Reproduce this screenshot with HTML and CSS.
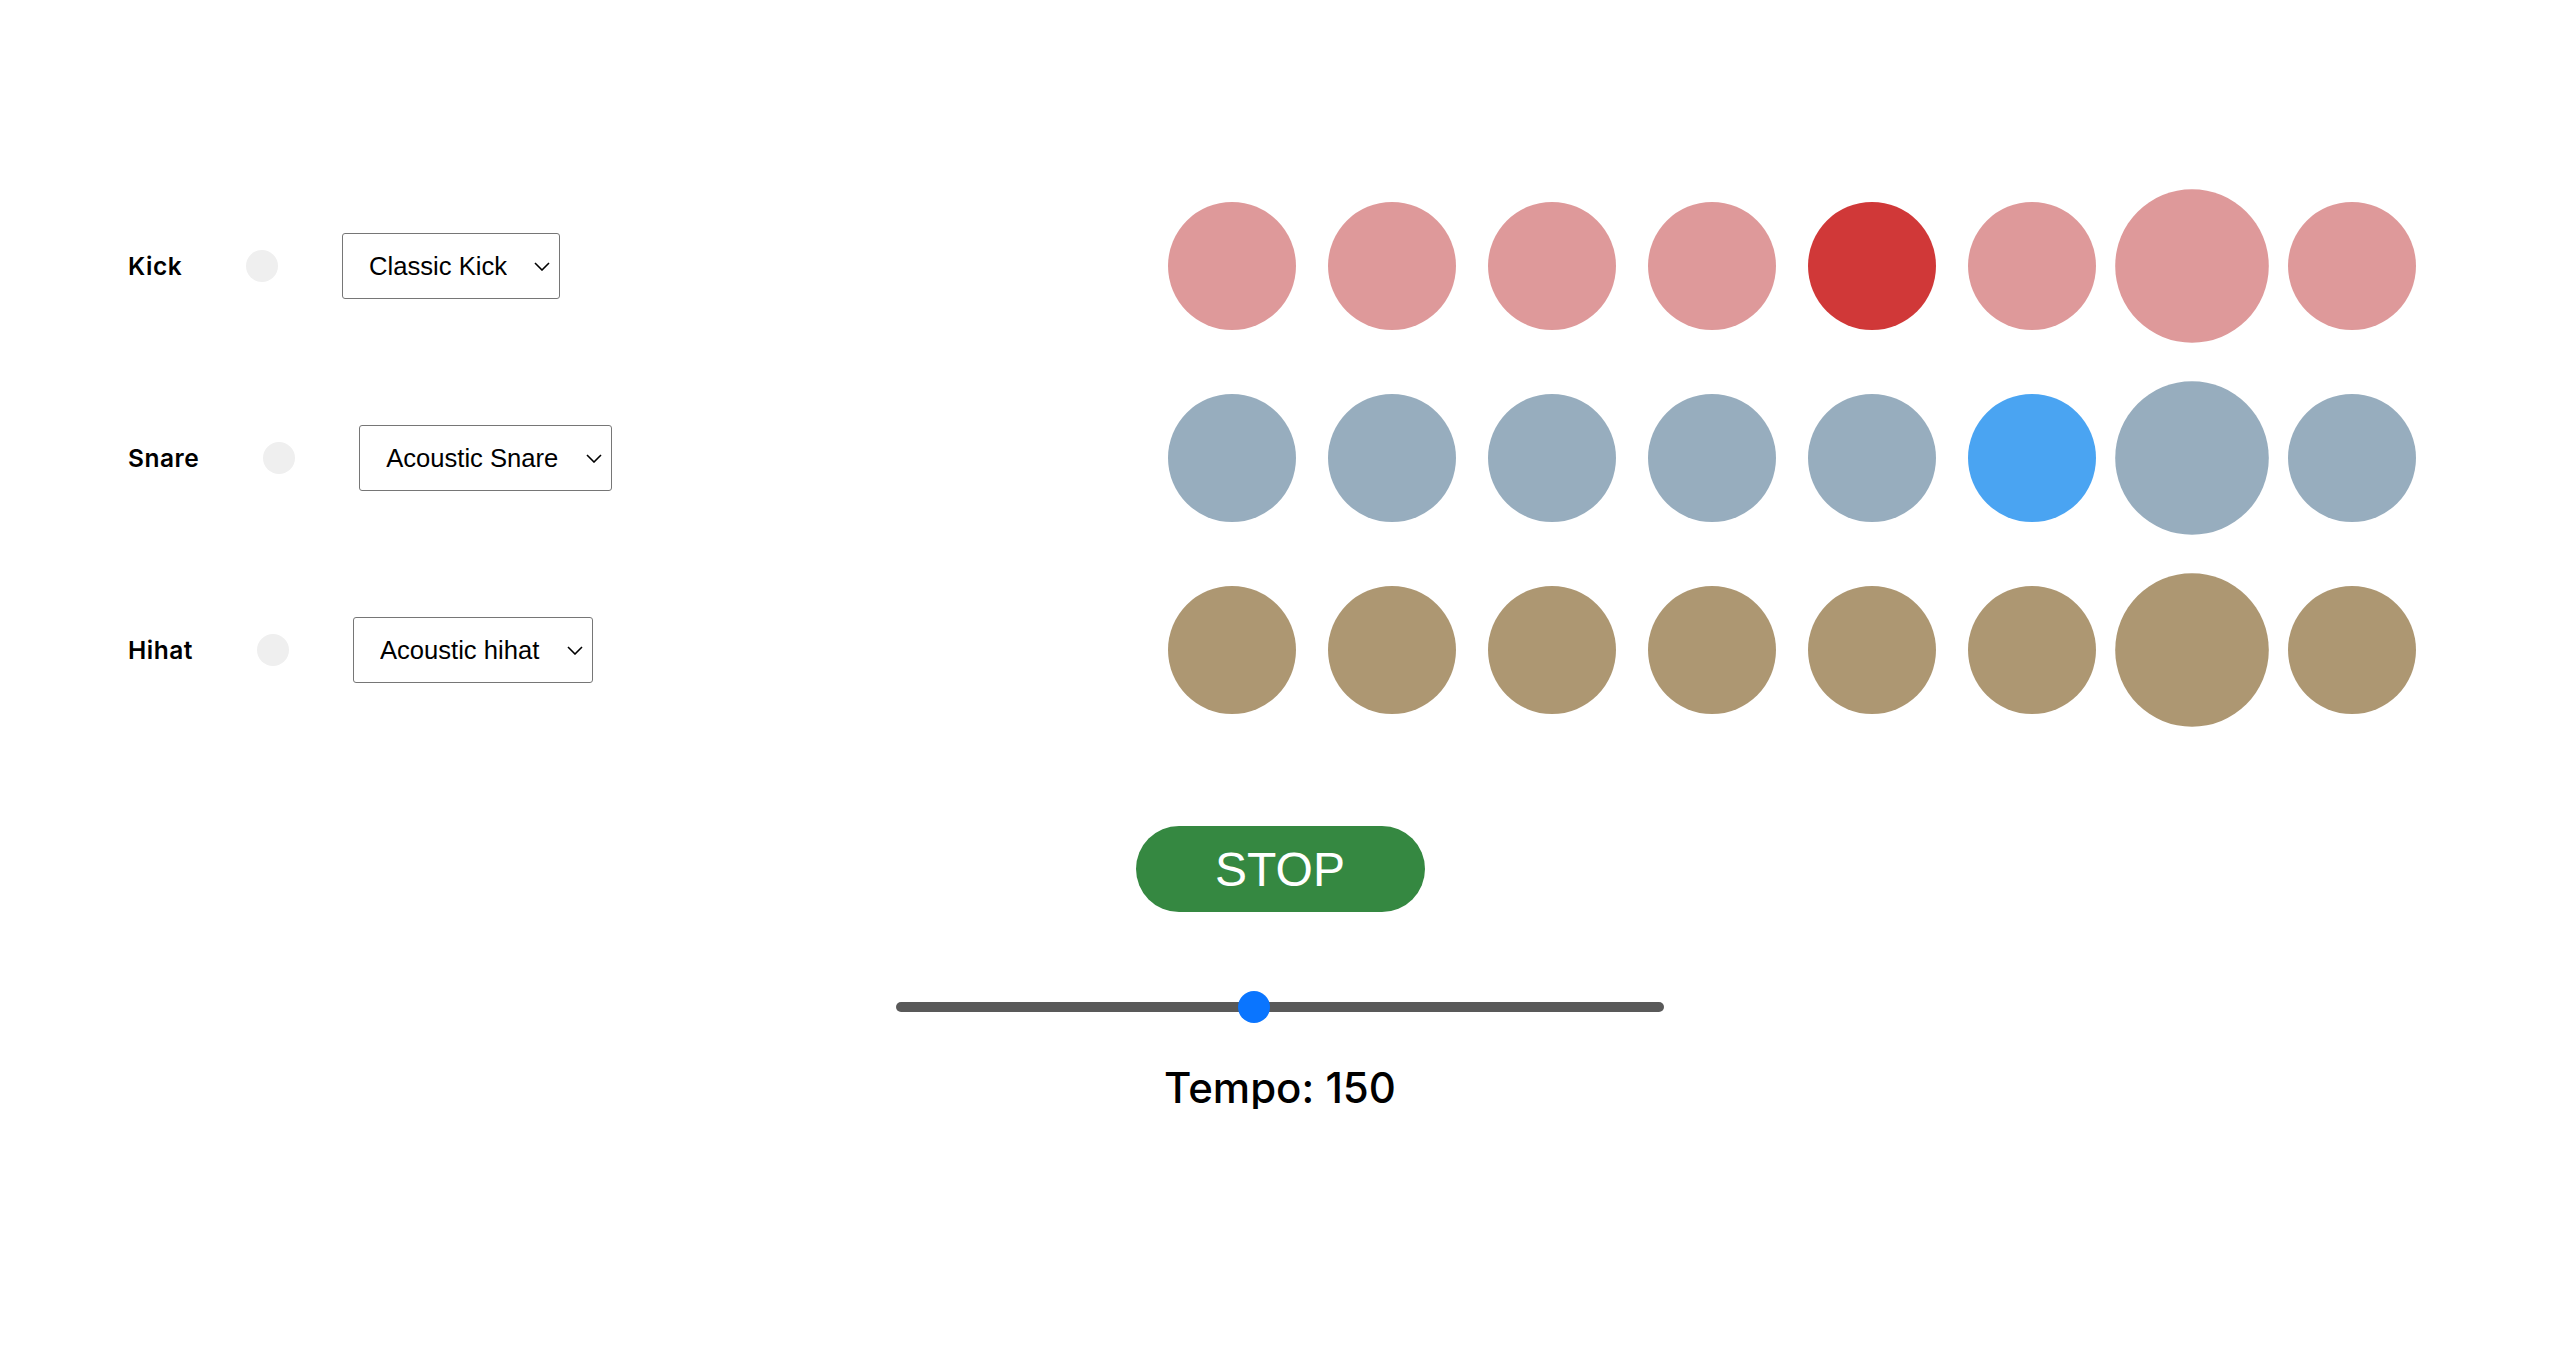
FILE: index.html
```html
<!DOCTYPE html>
<html lang="en">
<head>
<meta charset="utf-8">
<title>Drum Machine</title>
<link rel="stylesheet" href="styles.css">
</head>
<body>
<main class="app">
  <section class="tracks">
    <div class="track">
      <div class="controls">
        <span class="label">Kick</span>
        <span class="led"></span>
        <div class="select-wrap">
          <select class="sound"><option>Classic Kick</option></select>
          <svg class="chev" width="16" height="9" viewBox="0 0 16 9"><path d="M1 1l7 7 7-7"/></svg>
        </div>
      </div>
      <div class="steps kick">
        <span class="step"></span><span class="step"></span><span class="step"></span><span class="step"></span>
        <span class="step on"></span><span class="step"></span><span class="step big"></span><span class="step"></span>
      </div>
    </div>
    <div class="track">
      <div class="controls">
        <span class="label">Snare</span>
        <span class="led"></span>
        <div class="select-wrap">
          <select class="sound"><option>Acoustic Snare</option></select>
          <svg class="chev" width="16" height="9" viewBox="0 0 16 9"><path d="M1 1l7 7 7-7"/></svg>
        </div>
      </div>
      <div class="steps snare">
        <span class="step"></span><span class="step"></span><span class="step"></span><span class="step"></span>
        <span class="step"></span><span class="step on"></span><span class="step big"></span><span class="step"></span>
      </div>
    </div>
    <div class="track">
      <div class="controls">
        <span class="label">Hihat</span>
        <span class="led"></span>
        <div class="select-wrap">
          <select class="sound"><option>Acoustic hihat</option></select>
          <svg class="chev" width="16" height="9" viewBox="0 0 16 9"><path d="M1 1l7 7 7-7"/></svg>
        </div>
      </div>
      <div class="steps hihat">
        <span class="step"></span><span class="step"></span><span class="step"></span><span class="step"></span>
        <span class="step"></span><span class="step"></span><span class="step big"></span><span class="step"></span>
      </div>
    </div>
  </section>
  <section class="transport">
    <button class="stop" type="button">STOP</button>
    <input class="tempo-slider" type="range" min="20" max="300" value="150">
    <p class="tempo">Tempo: 150</p>
  </section>
</main>
</body>
</html>
```

FILE: styles.css
```css
* { box-sizing: border-box; }

html, body {
  margin: 0;
  background: #ffffff;
}

body {
  font-family: "Inter", "Liberation Sans", sans-serif;
  color: #000;
}

.app {
  display: flex;
  flex-direction: column;
  padding-top: 202px;
}

.tracks {
  display: flex;
  flex-direction: column;
  gap: 64px;
}

.track {
  display: flex;
  justify-content: space-between;
  align-items: center;
  height: 128px;
  padding: 0 144px 0 128px;
}

.controls {
  display: flex;
  align-items: center;
  gap: 64px;
}

.label {
  font-family: "Inter", sans-serif;
  font-weight: 600;
  font-size: 24.5px;
  letter-spacing: 0.5px;
}

.led {
  width: 32px;
  height: 32px;
  border-radius: 50%;
  background: #efefef;
}

.select-wrap {
  position: relative;
  display: flex;
}

.sound {
  -webkit-appearance: none;
  appearance: none;
  height: 66px;
  margin: 0;
  padding: 0 52px 0 26px;
  border: 1px solid #767676;
  border-radius: 3px;
  background: #fff;
  color: #000;
  font-family: "Liberation Sans", Arial, sans-serif;
  font-size: 25.6px;
}

.chev {
  position: absolute;
  right: 10px;
  top: 29px;
  fill: none;
  stroke: #000;
  stroke-width: 1.6;
  pointer-events: none;
}

.steps {
  display: flex;
  gap: 32px;
}

.step {
  width: 128px;
  height: 128px;
  border-radius: 50%;
}

.step.big { transform: scale(1.2); }

.kick .step { background: #de999a; }
.kick .step.on { background: #d03838; }
.snare .step { background: #97adbe; }
.snare .step.on { background: #4aa4f2; }
.hihat .step { background: #ad9772; }

.transport {
  display: flex;
  flex-direction: column;
  align-items: center;
  padding-top: 112px;
}

.stop {
  width: 289px;
  height: 86px;
  border: none;
  border-radius: 43px;
  background: #358841;
  color: #fff;
  font-family: "Liberation Sans", Arial, sans-serif;
  font-size: 48px;
  padding: 0;
}

.tempo-slider {
  -webkit-appearance: none;
  appearance: none;
  width: 768px;
  height: 32px;
  margin: 79px 0 0;
  background: transparent;
}

.tempo-slider::-webkit-slider-runnable-track {
  height: 10px;
  border-radius: 5px;
  background: #595959;
}

.tempo-slider::-webkit-slider-thumb {
  -webkit-appearance: none;
  appearance: none;
  width: 32px;
  height: 32px;
  margin-top: -11px;
  border-radius: 50%;
  background: #0a75ff;
  border: none;
}

.tempo {
  margin: 44px 0 0;
  font-family: "Inter", sans-serif;
  font-weight: 500;
  font-size: 42px;
  line-height: 1;
}
```
